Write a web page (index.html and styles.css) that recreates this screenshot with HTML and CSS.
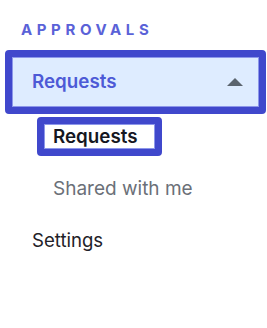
FILE: index.html
```html
<!DOCTYPE html>
<html>
<head>
<meta charset="utf-8">
<link rel="stylesheet" href="styles.css">
</head>
<body>
<nav class="sidebar">
  <div class="section-title">APPROVALS</div>
  <div class="group">
    <div class="group-header">
      <span class="group-label">Requests</span>
      <svg class="caret" width="16" height="8" viewBox="0 0 16 8"><path d="M8 0 L16 8 L0 8 Z" fill="#5b646e"/></svg>
    </div>
    <div class="sub-list">
      <div class="sub-item active"><span>Requests</span></div>
      <div class="sub-item"><span class="muted">Shared with me</span></div>
    </div>
  </div>
  <div class="item">Settings</div>
</nav>
</body>
</html>
```
FILE: styles.css
```css
html, body {
  margin: 0;
  padding: 0;
  background: #ffffff;
}
body {
  font-family: Inter, "Noto Sans", sans-serif;
  width: 267px;
  height: 328px;
  overflow: hidden;
}
.sidebar {
  display: flex;
  flex-direction: column;
  padding-top: 21px;
}
.section-title {
  font-size: 15px;
  line-height: 18px;
  font-weight: 700;
  letter-spacing: 4.6px;
  color: #5a62d8;
  padding-left: 21px;
  margin-bottom: 11px;
}
.group {
  display: flex;
  flex-direction: column;
}
.group-header {
  margin-left: 5px;
  width: 261px;
  height: 64px;
  box-sizing: border-box;
  border: 7px solid #4048cc;
  border-radius: 4px;
  background: #deecff;
  box-shadow: inset 0 0 0 1px #8d97ea;
  display: flex;
  align-items: center;
  justify-content: space-between;
  padding: 0 16px 0 20px;
}
.group-label {
  font-size: 18.8px;
  line-height: 22px;
  font-weight: 600;
  color: #4d5ad6;
}
.caret {
  display: block;
}
.sub-list {
  display: flex;
  flex-direction: column;
  margin-top: 3px;
}
.sub-item {
  margin-left: 37px;
  display: flex;
  align-items: center;
  font-size: 19px;
  line-height: 22px;
  padding-left: 16px;
  height: 40px;
}
.sub-item.active {
  width: 125px;
  height: 39px;
  box-sizing: border-box;
  border: 7px solid #4048cc;
  border-radius: 4px;
  box-shadow: inset 0 0 0 1px #8d97ea;
  padding-left: 9px;
  font-size: 18.8px;
  font-weight: 600;
  color: #15171f;
  margin-bottom: 13px;
}
.muted {
  color: #6b7078;
}
.item {
  font-size: 18.6px;
  line-height: 22px;
  color: #1f2128;
  padding-left: 32px;
  height: 40px;
  display: flex;
  align-items: center;
  margin-top: 11px;
}
```
